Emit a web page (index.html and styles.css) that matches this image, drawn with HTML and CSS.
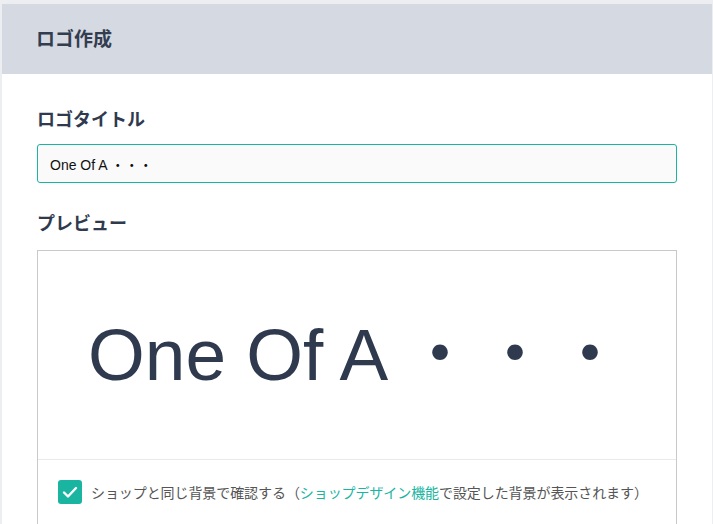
FILE: index.html
```html
<!DOCTYPE html>
<html lang="ja">
<head>
<meta charset="utf-8">
<link rel="stylesheet" href="styles.css">
</head>
<body>
<div class="card">
  <div class="card-header">ロゴ作成</div>
  <div class="card-body">
    <div class="label">ロゴタイトル</div>
    <input class="title-input" type="text" value="One Of A ・・・">
    <div class="label preview-label">プレビュー</div>
    <div class="preview">
      <div class="preview-stage"><span class="logo-text">One Of A <span class="dots">・・・</span></span></div>
      <div class="preview-footer">
        <span class="checkbox">
          <svg viewBox="0 0 24 24" width="24" height="24"><path d="M6 12.5l4 4 8-8.5" fill="none" stroke="#fff" stroke-width="2.4" stroke-linecap="round" stroke-linejoin="round"/></svg>
        </span>
        <span class="check-text">ショップと同じ背景で確認する（<span class="link">ショップデザイン機能</span>で設定した背景が表示されます）</span>
      </div>
    </div>
  </div>
</div>
</body>
</html>
```
FILE: styles.css
```css
html, body { margin: 0; padding: 0; }
body {
  background: #eceef1;
  padding: 4px 1px 0 2px;
  font-family: "Liberation Sans", "Noto Sans CJK JP", sans-serif;
  color: #2f3a4e;
  height: 520px;
  overflow: hidden;
}
.card {
  background: #fff;
  height: 520px;
}
.card-header {
  box-sizing: border-box;
  background: #d5d9e1;
  height: 70px;
  display: flex;
  align-items: center;
  padding: 0 0 4px 34px;
  font-size: 19px;
  font-weight: bold;
  color: #333d50;
  font-family: "Noto Sans CJK JP", sans-serif;
}
.card-body {
  padding: 32px 34px 0 35px;
}
.label {
  font-family: "Noto Sans CJK JP", sans-serif;
  font-size: 18px;
  font-weight: bold;
  line-height: 24px;
  color: #2f3a4e;
}
.title-input {
  display: block;
  box-sizing: border-box;
  width: 640px;
  height: 39px;
  margin-top: 14px;
  border: 1px solid #1ab5a1;
  border-radius: 3px;
  background: #fafafa;
  padding: 0 12px;
  font-family: "Liberation Sans", "Noto Sans CJK JP", sans-serif;
  font-size: 14px;
  color: #111;
  outline: none;
}
.preview-label {
  margin-top: 27px;
}
.preview {
  box-sizing: border-box;
  width: 640px;
  margin-top: 16px;
  border: 1px solid #c9c9c9;
  border-bottom: none;
  height: 290px;
}
.preview-stage {
  height: 208px;
  display: flex;
  align-items: center;
  padding-left: 50px;
  border-bottom: 1px solid #e9e9e9;
}
.logo-text {
  font-family: "Liberation Sans", "Noto Sans CJK JP", sans-serif;
  font-size: 73px;
  color: #2f3a4f;
  white-space: nowrap;
  margin-top: -14px;
}
.dots {
  letter-spacing: 2px;
  margin-left: -1px;
}
.preview-footer {
  display: flex;
  align-items: center;
  padding: 20px 0 0 20px;
  gap: 9px;
}
.checkbox {
  width: 24px;
  height: 24px;
  border-radius: 3px;
  background: #1ab5a1;
  display: flex;
  align-items: center;
  justify-content: center;
}
.checkbox svg { display: block; }
.check-text {
  font-family: "Noto Sans CJK JP", sans-serif;
  font-size: 14px;
  color: #555;
  white-space: nowrap;
  letter-spacing: -0.08px;
}
.link { color: #1ab5a1; }
```
